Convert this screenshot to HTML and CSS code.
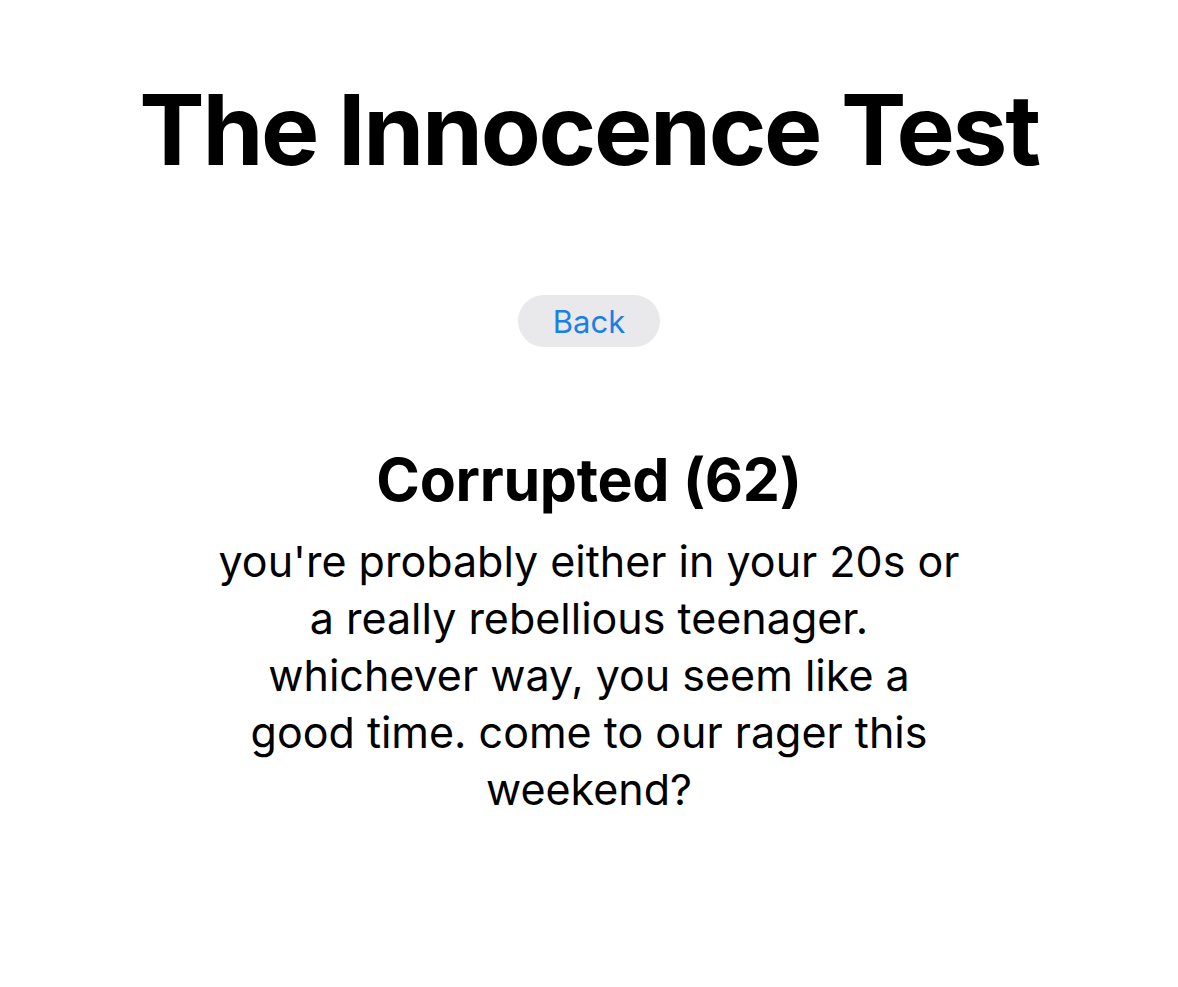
FILE: index.html
```html
<!DOCTYPE html>
<html lang="en">
<head>
<meta charset="utf-8">
<title>The Innocence Test</title>
<link rel="stylesheet" href="styles.css">
</head>
<body>
<main class="page">
  <h1 class="title">The Innocence Test</h1>
  <button class="back-btn" type="button">Back</button>
  <section class="result">
    <h2 class="result-title">Corrupted (62)</h2>
    <p class="result-text">you're probably either in your 20s or a really rebellious teenager. whichever way, you seem like a good time. come to our rager this weekend?</p>
  </section>
</main>
</body>
</html>
```
FILE: styles.css
```css
html, body {
  margin: 0;
  padding: 0;
  background: #ffffff;
}
body {
  font-family: Inter, "Noto Sans", "Liberation Sans", sans-serif;
  color: #000;
}
.page {
  display: flex;
  flex-direction: column;
  align-items: center;
  padding-top: 71px;
}
.title {
  margin: 0;
  font-size: 98px;
  font-weight: 700;
  line-height: 118px;
  letter-spacing: -2.3px;
}
.back-btn {
  margin-top: 106px;
  width: 142px;
  height: 52px;
  border: none;
  border-radius: 26px;
  background: #e9e9eb;
  color: #1a7fe6;
  font-family: inherit;
  font-size: 31px;
  font-weight: 400;
  padding: 0;
}
.result {
  margin-top: 98px;
  display: flex;
  flex-direction: column;
  align-items: center;
  text-align: center;
}
.result-title {
  margin: 0;
  font-size: 59px;
  font-weight: 700;
  line-height: 70px;
  letter-spacing: -0.3px;
}
.result-text {
  margin: 18px 0 0;
  width: 752px;
  font-size: 43px;
  line-height: 57px;
  font-weight: 400;
}
```
